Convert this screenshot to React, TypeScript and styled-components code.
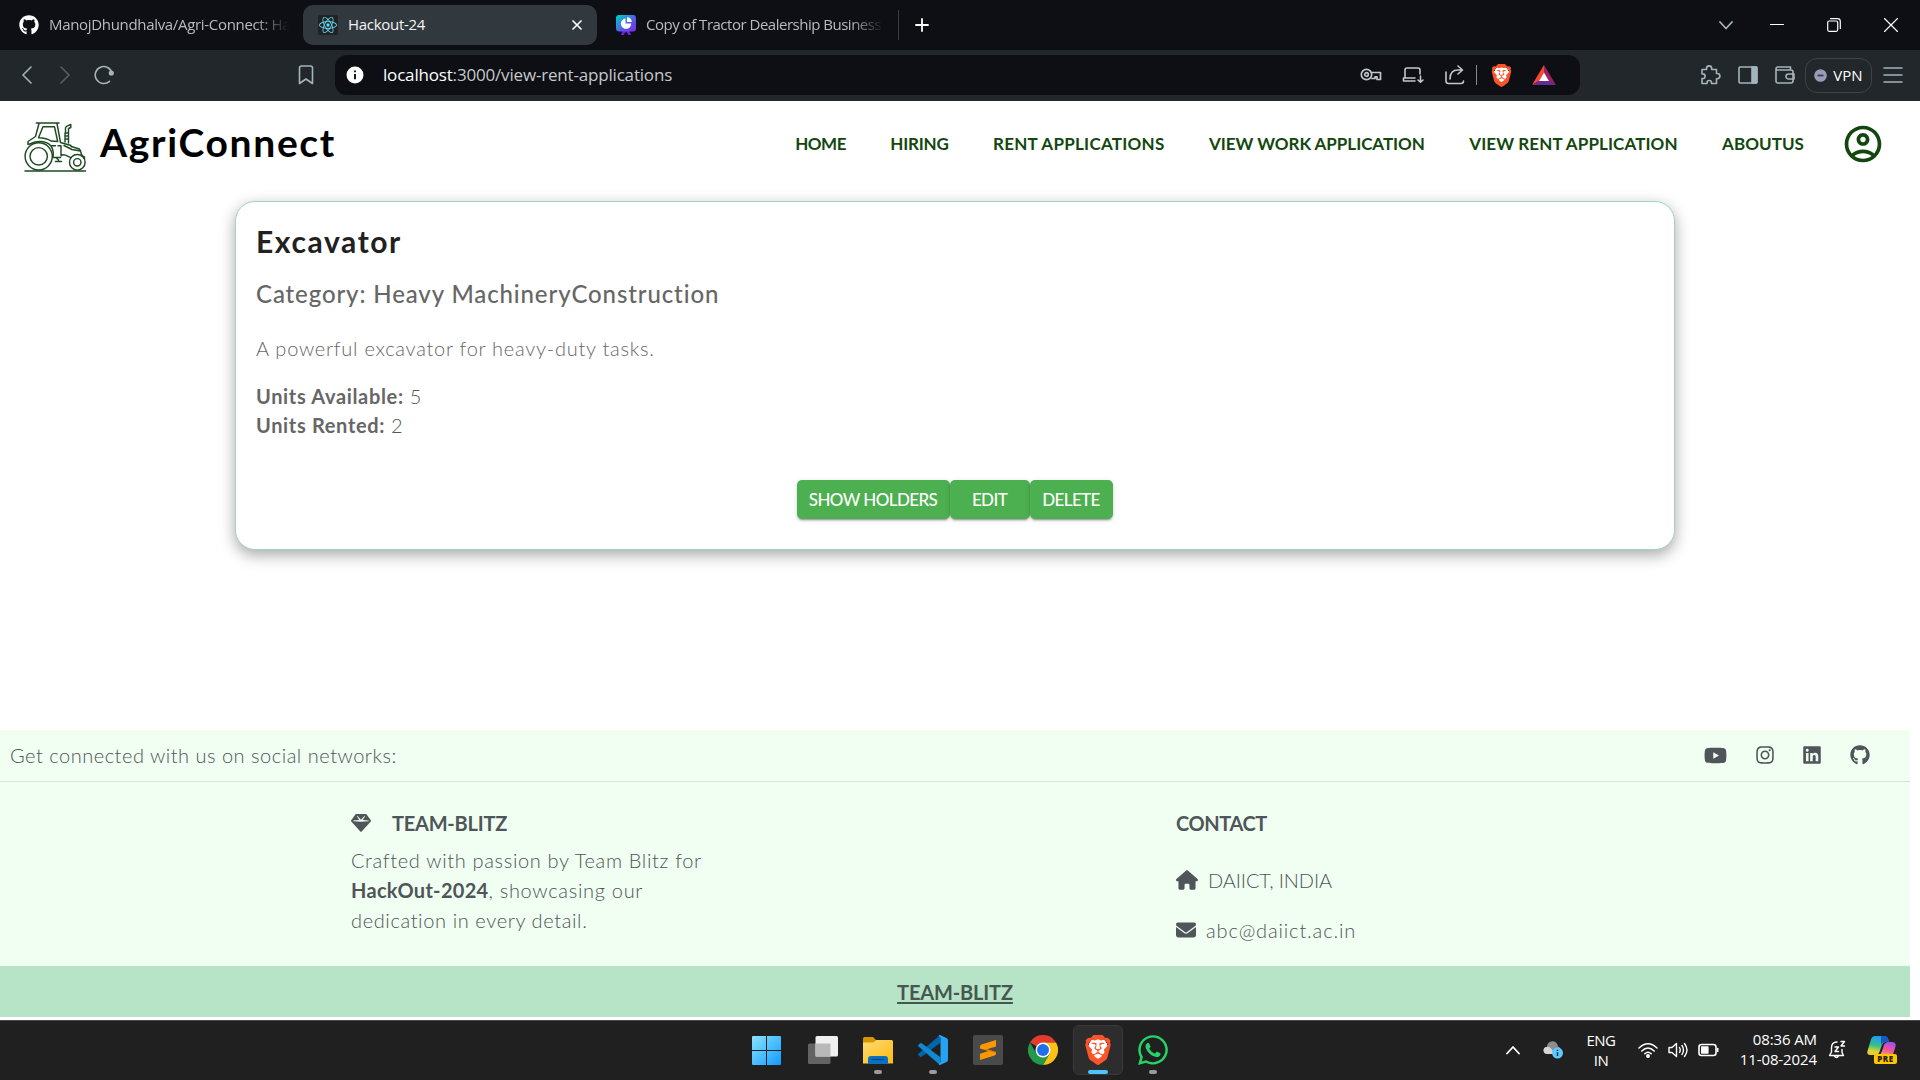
import React from "react";
import styled, { createGlobalStyle, css } from "styled-components";
import {
  FaGithub,
  FaYoutube,
  FaInstagram,
  FaLinkedin,
  FaGem,
  FaHouse,
  FaEnvelope,
  FaWhatsapp,
} from "react-icons/fa6";
import { MdOutlineAccountCircle } from "react-icons/md";
import { SiBrave, SiReact } from "react-icons/si";

const GlobalStyle = createGlobalStyle`
  * { box-sizing: border-box; }
  body {
    margin: 0;
    background: #fff;
    font-family: Lato, "Open Sans", sans-serif;
    overflow: hidden;
  }
  h1, h2, h3, p { margin: 0; }
  svg { display: block; flex: none; }
`;

const uiFont = css`
  font-family: "Open Sans", "Noto Sans", sans-serif;
`;

const Screen = styled.div`
  width: 1920px;
  height: 1080px;
  display: flex;
  flex-direction: column;
`;

/* ---------- browser chrome ---------- */

const TabStrip = styled.div`
  ${uiFont}
  height: 50px;
  flex: none;
  display: flex;
  align-items: center;
  background: #0d0f14;
  padding-left: 9px;
`;

const Tab = styled.div<{ $active?: boolean; $width: number; $inset: number }>`
  width: ${(p) => p.$width}px;
  height: 40px;
  display: flex;
  align-items: center;
  gap: 10px;
  padding: 0 14px 0 ${(p) => p.$inset}px;
  border-radius: 10px;
  font-size: 15px;
  color: ${(p) => (p.$active ? "#f1f3f4" : "#b9bbbe")};
  background: ${(p) => (p.$active ? "#31393e" : "transparent")};
`;

const TabTitle = styled.span<{ $fade?: boolean; $track: number }>`
  flex: 1;
  min-width: 0;
  padding-bottom: 2px;
  white-space: nowrap;
  letter-spacing: ${(p) => p.$track}px;
  ${(p) =>
    p.$fade &&
    css`
      mask-image: linear-gradient(to right, #000 calc(100% - 34px), transparent);
    `}
`;

const ReactTile = styled.span`
  width: 20px;
  height: 20px;
  display: grid;
  place-items: center;
  border-radius: 2px;
  background: #222;
  color: #61dafb;
`;

const TabDivider = styled.span`
  width: 1px;
  height: 30px;
  background: #3a3d42;
  margin-right: 16px;
`;

const WindowControls = styled.div`
  margin-left: auto;
  display: flex;
  align-items: center;
  gap: 43px;
  padding-right: 22px;
`;

const TabSearch = styled.span`
  margin-right: -6px;
`;

const Toolbar = styled.div`
  ${uiFont}
  height: 51px;
  flex: none;
  display: flex;
  align-items: center;
  background: #21272a;
  padding: 0 17px 1px 20px;
  color: #a5b4bc;
`;

const NavButtons = styled.div`
  display: flex;
  align-items: center;
  gap: 23px;
`;

const BookmarkSlot = styled.div`
  margin-left: 184px;
`;

const AddressBar = styled.div`
  width: 1245px;
  height: 40px;
  margin-left: 21px;
  display: flex;
  align-items: center;
  padding: 0 24px 0 11px;
  border-radius: 12px;
  background: #0d0f14;
  color: #c3c6c9;
`;

const Url = styled.span`
  margin: 0 auto 0 19px;
  padding-bottom: 1px;
  font-size: 17px;
  letter-spacing: -0.18px;
  color: #c6c8ca;
`;

const UrlHost = styled.span`
  color: #fff;
`;

const AddressActions = styled.div`
  display: flex;
  align-items: center;
  gap: 20px;
`;

const ShieldGroup = styled.div`
  display: flex;
  align-items: center;
  gap: 13px;
  margin-left: -10px;
`;

const ThinRule = styled.span`
  width: 1px;
  height: 20px;
  background: #85898c;
`;

const BraveMark = styled(SiBrave)`
  color: #fb542b;
  background: radial-gradient(ellipse 34% 38% at 50% 46%, #fff 96%, transparent 100%);
`;

const BatTriangleSlot = styled.span`
  margin-left: 6px;
`;

const ToolbarActions = styled.div`
  display: flex;
  align-items: center;
  gap: 17px;
  margin-left: auto;
`;

const VpnPill = styled.div`
  width: 67px;
  height: 35px;
  margin: 0 -6px 0 -7px;
  display: flex;
  align-items: center;
  justify-content: center;
  gap: 6px;
  border: 1px solid #3b4549;
  border-radius: 12px;
  font-size: 15px;
  color: #fff;
`;

/* ---------- page ---------- */

const Page = styled.main`
  height: 919px;
  width: 1910px;
  display: flex;
  flex-direction: column;
`;

const SiteHeader = styled.header`
  height: 86px;
  flex: none;
  display: flex;
  align-items: center;
  padding: 0 25px 0 20px;
`;

const LogoSlot = styled.span`
  margin-top: 5px;
`;

const BrandName = styled.h1`
  margin: -4px 0 0 10px;
  font-size: 39px;
  line-height: 48px;
  font-weight: 700;
  letter-spacing: 1.66px;
  color: #000;
`;

const SiteNav = styled.nav`
  display: flex;
  gap: 44.4px;
  margin-left: auto;
  padding-bottom: 2px;
`;

const NavLink = styled.a<{ $track: number }>`
  font-size: 17px;
  font-weight: 700;
  white-space: nowrap;
  letter-spacing: ${(p) => p.$track}px;
  color: #13470f;
`;

const AccountIcon = styled(MdOutlineAccountCircle)`
  margin-left: 37px;
  color: #13470f;
`;

const Card = styled.section`
  width: 1440px;
  height: 349px;
  flex: none;
  margin: 14px auto 0;
  padding: 21px 20px 0;
  border: 1px solid #a3d5bb;
  border-radius: 20px;
  background: #fff;
  box-shadow: rgba(0, 0, 0, 0.35) 0 5px 15px;
`;

const CardTitle = styled.h2`
  font-size: 30px;
  line-height: 36px;
  letter-spacing: 1.6px;
  color: #212121;
`;

const CardCategory = styled.h3`
  margin-top: 20px;
  font-size: 24px;
  line-height: 30px;
  font-weight: 500;
  letter-spacing: 0.88px;
  color: #666;
`;

const CardText = styled.p`
  margin: 24px 0 19px;
  font-size: 20px;
  line-height: 30px;
  font-weight: 300;
  letter-spacing: 0.74px;
  color: #666;
`;

const UnitLine = styled.p`
  display: flex;
  gap: 6px;
  font-size: 20px;
  line-height: 29px;
  font-weight: 300;
  color: #555;
`;

const UnitLabel = styled.strong`
  font-weight: 700;
  letter-spacing: 0.66px;
  color: #666;
`;

const Actions = styled.div`
  margin-top: 40px;
  display: flex;
  justify-content: center;
`;

const ActionButton = styled.button<{ $width: number }>`
  width: ${(p) => p.$width}px;
  height: 39px;
  padding: 0 1px 0 0;
  border: 0;
  border-radius: 5px;
  background: #4caf50;
  color: #fff;
  font: 500 17px Lato, sans-serif;
  letter-spacing: -0.6px;
  white-space: nowrap;
  box-shadow: 0 3px 1px -2px rgba(0, 0, 0, 0.2), 0 2px 2px rgba(0, 0, 0, 0.14),
    0 1px 5px rgba(0, 0, 0, 0.12);
`;

const SiteFooter = styled.footer`
  margin-top: 180px;
  display: flex;
  flex-direction: column;
  background: #f0fff1;
  color: #4f5559;
`;

const SocialRow = styled.div`
  height: 52px;
  display: flex;
  align-items: center;
  justify-content: space-between;
  padding: 0 40px 1px 10px;
  border-bottom: 1px solid #d7e4e0;
`;

const LightText = styled.p<{ $track: number }>`
  font-size: 20px;
  line-height: 30px;
  font-weight: 300;
  white-space: nowrap;
  letter-spacing: ${(p) => p.$track}px;
`;

const StrongText = styled.strong`
  font-weight: 700;
  letter-spacing: 0.3px;
`;

const SocialLinks = styled.div`
  display: flex;
  align-items: center;
  gap: 27.7px;
`;

const FooterColumns = styled.div`
  height: 184px;
  display: grid;
  grid-template-columns: 825px 1fr;
  padding: 29px 0 0 351px;
`;

const FooterTitle = styled.h3<{ $track: number; $gapBelow: number }>`
  display: flex;
  align-items: center;
  gap: 21px;
  margin-bottom: ${(p) => p.$gapBelow}px;
  font-size: 20px;
  line-height: 24px;
  font-weight: 700;
  letter-spacing: ${(p) => p.$track}px;
`;

const ContactLines = styled.div`
  display: flex;
  flex-direction: column;
  gap: 20px;
`;

const ContactLine = styled.div`
  display: flex;
  align-items: center;
  gap: 10px;
`;

const CopyrightBar = styled.div`
  height: 51px;
  display: flex;
  align-items: center;
  justify-content: center;
  background: #b7e4c7;
`;

const CopyrightLink = styled.a`
  font-size: 20px;
  font-weight: 700;
  letter-spacing: -0.15px;
  color: #465751;
  text-decoration: underline;
  text-decoration-skip-ink: none;
  text-decoration-thickness: 2px;
  text-underline-offset: 2px;
`;

/* ---------- taskbar ---------- */

const Taskbar = styled.div`
  ${uiFont}
  height: 60px;
  flex: none;
  display: flex;
  align-items: center;
  background: #202020;
  border-top: 1px solid #474747;
  padding: 0 23px 1px 743px;
  color: #fff;
`;

const TaskIcons = styled.div`
  display: flex;
  gap: 5px;
`;

const TaskSlot = styled.div<{ $active?: boolean; $open?: boolean; $shift?: number }>`
  width: 50px;
  height: 50px;
  display: grid;
  place-items: center;
  position: relative;
  padding-right: ${(p) => p.$shift ?? 0}px;
  border-radius: 6px;
  border: 1px solid ${(p) => (p.$active ? "#393939" : "transparent")};
  background: ${(p) => (p.$active ? "#2d2d2d" : "transparent")};
  &::after {
    content: "";
    display: ${(p) => (p.$active || p.$open ? "block" : "none")};
    position: absolute;
    bottom: 0;
    left: calc(50% - ${(p) => (p.$active ? 10 : 4)}px);
    width: ${(p) => (p.$active ? 20 : 8)}px;
    height: 4px;
    border-radius: 2px;
    background: ${(p) => (p.$active ? "#4cc2ff" : "#9a9a9a")};
  }
`;

const Tray = styled.div`
  margin-left: auto;
  display: flex;
  align-items: center;
  font-size: 15px;
  line-height: 20px;
`;

const Language = styled.div`
  width: 30px;
  margin: -1px 22px 0 23px;
  text-align: center;
  letter-spacing: -0.5px;
`;

const StatusIcons = styled.div`
  display: flex;
  gap: 10px;
`;

const Clock = styled.div`
  width: 78px;
  margin: -2px 11px 0 20px;
  text-align: right;
  white-space: nowrap;
  letter-spacing: -0.1px;
`;

const CloudSlot = styled.span`
  margin-left: 23px;
`;

const CopilotSlot = styled.span`
  margin-left: 21px;
`;

/* ---------- drawings ---------- */

type StrokeProps = {
  w: number;
  h: number;
  sw?: number;
  color?: string;
  children: React.ReactNode;
};

const Stroke = ({ w, h, sw = 1.6, color = "currentColor", children }: StrokeProps) => (
  <svg
    width={w}
    height={h}
    viewBox={`0 0 ${w} ${h}`}
    fill="none"
    stroke={color}
    strokeWidth={sw}
    strokeLinecap="round"
    strokeLinejoin="round"
  >
    {children}
  </svg>
);

const Tractor = () => (
  <Stroke w={70} h={58} sw={1.45} color="#1f4a23">
    <path d="M5 53H65.500" />
    <circle cx="18.700" cy="38.300" r="13.600" />
    <circle cx="18.700" cy="38.300" r="8.700" />
    <circle cx="57.300" cy="44.300" r="7.800" />
    <circle cx="57.300" cy="44.300" r="3.700" />
    <path d="M16.300 5H39M19 5.500L15.500 18.500L8 23.500L8 26.500L11 25.500C17 22.500 26 22.500 31 28C33 31 34 34 33 39.500H40.500" />
    <path d="M23 8.800H34.500L37.700 23.500L31 23C28 21 24 20 18.500 19.800Z" />
    <path d="M37 5.500L40.500 24.500L51 27.500M51 28.500L54 29.300M44 27.500L52 31.500L60.500 33L61.500 36.500L62.500 38M53.500 29.300L59.500 31L60.500 33" />
    <path d="M45 24V15H48.500V25M45.500 15V10Q46 7.800 48.500 7.500L50.800 6.500V9.500L48.500 10.500V15M45.500 18H48M45.500 21H48" />
    <path d="M31.500 27.800H35.500M38 27.800H41V37M41 33V38M42 37C46 35.500 48 39.500 51 39.500M36 39.500L38.500 42V43.500M35.500 43.500H41.500M62 38L64.500 39V40.500" />
  </Stroke>
);

const CanvaTile = () => (
  <svg width="20" height="20" viewBox="0 0 20 20">
    <defs>
      <linearGradient id="tile" x1="0" y1="0" x2="1" y2="1">
        <stop offset="0.1" stopColor="#00c4cc" />
        <stop offset="0.6" stopColor="#5b57e6" />
        <stop offset="1" stopColor="#7d2ae8" />
      </linearGradient>
    </defs>
    <path d="M7 15L5 20H7.500L10 16.500L12.500 20H15L13 15Z" fill="#6d20e0" />
    <rect width="20" height="16.500" rx="3" fill="url(#tile)" />
    <path d="M9.500 3.500V8.500H15.200A5.200 5.200 0 1 1 9.500 3.500Z" fill="#fff" />
    <path d="M11 2.300A5 5 0 0 1 15.800 7H11Z" fill="#fff" />
  </svg>
);

const InfoDot = () => (
  <svg width="18" height="18" viewBox="0 0 18 18">
    <circle cx="9" cy="9" r="8.500" fill="#fff" />
    <path d="M9 4.500V6.300M9 8V13.300" stroke="#0d0f14" strokeWidth="1.900" />
  </svg>
);

const BatTriangle = () => (
  <svg width="24" height="20" viewBox="0 0 24 20">
    <path d="M12 0L0 20L7 16L12 7.500Z" fill="#ff4724" />
    <path d="M12 0L24 20L17 16L12 7.500Z" fill="#9e1f63" />
    <path d="M0 20H24L17 15.500H7Z" fill="#662d91" />
    <path d="M12 7.500L7 16H17Z" fill="#fff" />
  </svg>
);

const WindowsLogo = () => (
  <svg width="29" height="29" viewBox="0 0 29 29">
    <defs>
      <linearGradient id="win" x1="0" y1="0" x2="1" y2="1">
        <stop offset="0" stopColor="#8be3ff" />
        <stop offset="1" stopColor="#0f9bff" />
      </linearGradient>
    </defs>
    <path
      d="M0 1Q0 0 1 0H14V14H0ZM15 0H28Q29 0 29 1V14H15ZM0 15H14V29H1Q0 29 0 28ZM15 15H29V28Q29 29 28 29H15Z"
      fill="url(#win)"
    />
  </svg>
);

const TaskView = () => (
  <svg width="30" height="28" viewBox="0 0 30 28">
    <rect x="0" y="7.500" width="22.500" height="20.500" rx="1.500" fill="#636363" />
    <rect x="7.500" y="0" width="22.500" height="20.500" rx="1.500" fill="#f0f0f0" />
    <rect x="7.500" y="7.500" width="15" height="13" fill="#b9b9b9" />
  </svg>
);

const FolderIcon = () => (
  <svg width="30" height="27" viewBox="0 0 30 27">
    <defs>
      <linearGradient id="folder" x1="0" y1="0" x2="1" y2="1">
        <stop offset="0" stopColor="#ffdb73" />
        <stop offset="1" stopColor="#fdba12" />
      </linearGradient>
    </defs>
    <path d="M0 1.500Q0 0 1.500 0H10L13 3L10 6H0Z" fill="#d99500" />
    <path d="M0 5.500H10L13 3H28.500Q30 3 30 4.500V26.500H0Z" fill="url(#folder)" />
    <path d="M5 27V22Q5 19 8 19H22Q25 19 25 22V27Z" fill="#0c6fc0" />
    <path d="M8.500 22.500H21.500" stroke="#064a86" strokeWidth="1.200" />
  </svg>
);

const CodeIcon = () => (
  <svg width="30" height="30" viewBox="0 0 30 30">
    <path d="M22 0L22.500 7.800L4 21.600Q2.800 22.400 1.800 21.500L0.500 20.200Q-0.300 19.300 0.600 18.500Z" fill="#0065a9" />
    <path d="M22 30L22.500 22.200L4 8.400Q2.800 7.600 1.800 8.500L0.500 9.800Q-0.300 10.700 0.600 11.500Z" fill="#1088d2" />
    <path d="M22 0L28.500 2.900Q30 3.600 30 5.200V24.800Q30 26.400 28.500 27.100L22 30Q21 30 20.600 29.200L22.500 27V3L20.600 0.800Q21 0 22 0Z" fill="#27a2f2" />
  </svg>
);

const SublimeIcon = () => (
  <svg width="30" height="30" viewBox="0 0 30 30">
    <rect width="30" height="30" rx="2" fill="#4a4a4a" />
    <path d="M23 5V11.500L14 14.200L23 17V18.500Q23 20 21.500 20.600L7 25V18.800L15.500 16L7 13.400V11.200Q7 10 8.500 9.500Z" fill="#ff9800" />
    <path d="M14 14.200L23 17V18L15.500 16L11 14.600Z" fill="#d97a00" />
  </svg>
);

const ChromeIcon = () => (
  <svg width="30" height="30" viewBox="0 0 30 30">
    <path d="M15 15L2 7.500A15 15 0 0 1 28 7.500H15Z" fill="#e33b2e" />
    <path d="M15 7.500H28A15 15 0 0 1 15 30L21.500 18.750Z" fill="#fbc116" />
    <path d="M2 7.500A15 15 0 0 0 15 30L21.500 18.750L15 15L8.500 18.750Z" fill="#229a4a" />
    <circle cx="15" cy="15" r="7.500" fill="#fff" />
    <circle cx="15" cy="15" r="6" fill="#1f6fea" />
  </svg>
);

const CloudInfo = () => (
  <svg width="20" height="18" viewBox="0 0 20 18">
    <path d="M4 6A5.500 5.500 0 0 1 15 5.500Q17.500 6 17.500 9L12 13H4.500A4.200 4.200 0 0 1 0.500 9Q1 6.500 4 6Z" fill="#8d8d8d" />
    <path d="M0.500 9Q1 5.800 4.500 5.800Q7 5.800 8.500 8L12 13H4.500Q0.500 13 0.500 9Z" fill="#d6d6d6" />
    <circle cx="14.500" cy="12" r="5.500" fill="#5ccaff" />
    <path d="M14.500 8.700V10M14.500 11.200V15" stroke="#14344a" strokeWidth="1.500" />
  </svg>
);

const Copilot = () => (
  <svg width="30" height="30" viewBox="0 0 30 30">
    <defs>
      <linearGradient id="copLeft" x1="0.500" y1="0" x2="0.300" y2="1">
        <stop offset="0" stopColor="#1d9bf5" />
        <stop offset="0.500" stopColor="#35c08b" />
        <stop offset="0.800" stopColor="#d8d436" />
        <stop offset="1" stopColor="#f6c92b" />
      </linearGradient>
      <linearGradient id="copRight" x1="0.700" y1="0" x2="0.300" y2="1">
        <stop offset="0" stopColor="#a24df0" />
        <stop offset="0.600" stopColor="#f0569a" />
        <stop offset="1" stopColor="#ff9a62" />
      </linearGradient>
    </defs>
    <path d="M8 1H17Q20 1 21 4L22 7H19Q16 7 15 10L12 18Q11 20 8 20H3Q-0.500 20 0.500 16L4 4.500Q5 1 8 1Z" fill="url(#copLeft)" />
    <path d="M14 1H17Q20 1 21 4L22 7H18Q15 7 14 10Z" fill="#1558c8" />
    <path d="M22 7H25.500Q29.500 7.500 28.500 11.500L26.500 18Q26 20 23 20H12.500Q14 19 15 16L17 10Q18 7 22 7Z" fill="url(#copRight)" />
    <rect x="7" y="19" width="23" height="10" rx="2" fill="#ffc700" />
    <text x="18.500" y="27" textAnchor="middle" fontFamily="Open Sans, sans-serif" fontWeight="800" fontSize="8" letterSpacing="0.600" fill="#2a2000">
      PRE
    </text>
  </svg>
);

/* ---------- data ---------- */

const navLinks: { label: string; track: number }[] = [
  { label: "HOME", track: -0.5 },
  { label: "HIRING", track: -0.22 },
  { label: "RENT APPLICATIONS", track: 0.27 },
  { label: "VIEW WORK APPLICATION", track: -0.03 },
  { label: "VIEW RENT APPLICATION", track: 0.1 },
  { label: "ABOUTUS", track: 0.07 },
];

const BrowserChrome = () => (
  <>
    <TabStrip>
      <Tab $width={294} $inset={10}>
        <FaGithub size={20} color="#fff" />
        <TabTitle $fade $track={-0.32}>ManojDhundhalva/Agri-Connect: Ha</TabTitle>
      </Tab>
      <Tab $active $width={294} $inset={15}>
        <ReactTile>
          <SiReact size={18} />
        </ReactTile>
        <TabTitle $track={-0.3}>Hackout-24</TabTitle>
        <Stroke w={12} h={12} sw={1.7} color="#fff">
          <path d="M2 2L10 10M10 2L2 10" />
        </Stroke>
      </Tab>
      <Tab $width={301} $inset={19}>
        <CanvaTile />
        <TabTitle $fade $track={-0.49}>Copy of Tractor Dealership Business</TabTitle>
      </Tab>
      <TabDivider />
      <Stroke w={14} h={14} sw={1.8} color="#fff">
        <path d="M7 1V13M1 7H13" />
      </Stroke>
      <WindowControls>
        <TabSearch>
          <Stroke w={14} h={10} sw={1.8} color="#a5b4bc">
            <path d="M1 2L7 8.500L13 2" />
          </Stroke>
        </TabSearch>
        <Stroke w={14} h={14} sw={1} color="#fff">
          <path d="M0.500 6.500H13.500" />
        </Stroke>
        <Stroke w={14} h={14} sw={1.2} color="#fff">
          <path d="M3.500 0.700H10.500Q13.300 0.700 13.300 3.500V10.500" />
          <rect x="0.700" y="3" width="10" height="10.300" rx="1.500" />
        </Stroke>
        <Stroke w={14} h={14} sw={1.2} color="#fff">
          <path d="M0.500 0.500L13.500 13.500M13.500 0.500L0.500 13.500" />
        </Stroke>
      </WindowControls>
    </TabStrip>
    <Toolbar>
      <NavButtons>
        <Stroke w={14} h={18}>
          <path d="M11 1L3 9L11 17" />
        </Stroke>
        <Stroke w={14} h={18} color="#566066">
          <path d="M4 1L12 9L4 17" />
        </Stroke>
        <Stroke w={20} h={20}>
          <path d="M18 8A8.500 8.500 0 1 0 15.500 16.300" />
          <circle cx="17.300" cy="8" r="1.800" fill="currentColor" />
        </Stroke>
      </NavButtons>
      <BookmarkSlot>
        <Stroke w={16} h={20}>
          <path d="M3.500 1H12.500Q14.500 1 14.500 3V18.500L8 14L1.500 18.500V3Q1.500 1 3.500 1Z" />
        </Stroke>
      </BookmarkSlot>
      <AddressBar>
        <InfoDot />
        <Url>
          <UrlHost>localhost</UrlHost>:3000/view-rent-applications
        </Url>
        <AddressActions>
          <Stroke w={22} h={16} sw={1.7}>
            <circle cx="6.500" cy="7.500" r="5.200" />
            <circle cx="6.500" cy="7.500" r="1.800" />
            <path d="M11.500 5.500H20.500V12.500H17V9.800H15V11.500H12" />
          </Stroke>
          <Stroke w={22} h={16} sw={1.6}>
            <path d="M3 11V3Q3 1 5 1H16Q18 1 18 3V7M13 11H1.500V14H13M18.500 9V15M16 13L18.500 15.200L21 13" />
          </Stroke>
          <Stroke w={22} h={20} sw={1.6}>
            <path d="M2 7V16Q2 18.500 4.500 18.500H17Q19.500 18.500 19.500 16M6 14Q6 5 14 5H17.500M14 1L18.500 5L14 9" />
          </Stroke>
          <ShieldGroup>
            <ThinRule />
            <BraveMark size={23} />
            <BatTriangleSlot>
              <BatTriangle />
            </BatTriangleSlot>
          </ShieldGroup>
        </AddressActions>
      </AddressBar>
      <ToolbarActions>
        <Stroke w={21} h={20} sw={1.6}>
          <path d="M2 4.500H6.500V3.500A2.600 2.600 0 0 1 11.700 3.500V4.500H16.500V8.500H17.300A2.600 2.600 0 0 1 17.300 13.700H16.500V18.500H11.500V17.700A2.200 2.200 0 0 0 7 17.700V18.500H2V13.500H2.800A2.300 2.300 0 0 0 2.800 8.900H2Z" />
        </Stroke>
        <Stroke w={20} h={18}>
          <rect x="1" y="1" width="18" height="16" rx="1" />
          <path d="M14 1H18.500V17H14Z" fill="currentColor" />
        </Stroke>
        <Stroke w={20} h={18}>
          <path d="M15.500 3.800V1H3Q1 1 1 3V15Q1 17 3 17H16Q18 17 18 15V5.800Q18 4 16 4H2" />
          <path d="M19 8H13.500A2.300 2.300 0 0 0 13.500 13H19Z" />
        </Stroke>
        <VpnPill>
          <svg width="13" height="13" viewBox="0 0 13 13">
            <circle cx="6.500" cy="6.500" r="6.300" fill="#9a9bb8" />
            <path d="M3.500 6.500H9.500" stroke="#3a3b52" strokeWidth="1.800" />
          </svg>
          VPN
        </VpnPill>
        <Stroke w={20} h={16} sw={1.5}>
          <path d="M1 1H19M1 8H19M1 15H19" />
        </Stroke>
      </ToolbarActions>
    </Toolbar>
  </>
);

const SystemTaskbar = () => (
  <Taskbar>
    <TaskIcons>
      <TaskSlot $shift={3}><WindowsLogo /></TaskSlot>
      <TaskSlot><TaskView /></TaskSlot>
      <TaskSlot $open><FolderIcon /></TaskSlot>
      <TaskSlot $open><CodeIcon /></TaskSlot>
      <TaskSlot><SublimeIcon /></TaskSlot>
      <TaskSlot><ChromeIcon /></TaskSlot>
      <TaskSlot $active><BraveMark size={30} /></TaskSlot>
      <TaskSlot $open><FaWhatsapp size={34} color="#25d366" /></TaskSlot>
    </TaskIcons>
    <Tray>
      <Stroke w={14} h={10} sw={1.8} color="#fff">
        <path d="M1 8.500L7 2L13 8.500" />
      </Stroke>
      <CloudSlot><CloudInfo /></CloudSlot>
      <Language>ENG<br />IN</Language>
      <StatusIcons>
        <Stroke w={20} h={18} sw={1.5} color="#fff">
          <path d="M1 7Q10 -1.500 19 7M3.800 10Q10 4 16.200 10M6.800 12.800Q10 9.800 13.200 12.800" />
          <circle cx="10" cy="15" r="1.200" fill="#fff" />
        </Stroke>
        <Stroke w={20} h={18} sw={1.4} color="#fff">
          <path d="M1 6.500V11.500H4L8.500 15.500V2.500L4 6.500ZM11.500 6.500Q13 9 11.500 11.500M14 4.500Q17 9 14 13.500M16.500 2.500Q21.500 9 16.500 15.500" />
        </Stroke>
        <Stroke w={21} h={18} sw={1.6} color="#fff">
          <rect x="1" y="3.500" width="17" height="11" rx="2.500" />
          <rect x="3.800" y="6" width="6" height="6" fill="#fff" />
          <path d="M19.700 7.500V10.500" />
        </Stroke>
      </StatusIcons>
      <Clock>08:36 AM<br />11-08-2024</Clock>
      <Stroke w={18} h={20} sw={1.4} color="#fff">
        <path d="M9 2Q3.500 2 3.500 8V12L1.500 15.500H15.500L14 12.500V9.500M6.500 16Q8.500 19 10.500 16M7 7H10.500L7 11.500H10.500M13 1.500H16.500L13 6H16.500" />
      </Stroke>
      <CopilotSlot><Copilot /></CopilotSlot>
    </Tray>
  </Taskbar>
);

export default function App() {
  return (
    <Screen>
      <GlobalStyle />
      <BrowserChrome />
      <Page>
        <SiteHeader>
          <LogoSlot><Tractor /></LogoSlot>
          <BrandName>AgriConnect</BrandName>
          <SiteNav>
            {navLinks.map((l) => (
              <NavLink key={l.label} $track={l.track}>
                {l.label}
              </NavLink>
            ))}
          </SiteNav>
          <AccountIcon size={44} />
        </SiteHeader>

        <Card>
          <CardTitle>Excavator</CardTitle>
          <CardCategory>Category: Heavy MachineryConstruction</CardCategory>
          <CardText>A powerful excavator for heavy-duty tasks.</CardText>
          <UnitLine><UnitLabel>Units Available:</UnitLabel>5</UnitLine>
          <UnitLine><UnitLabel>Units Rented:</UnitLabel>2</UnitLine>
          <Actions>
            <ActionButton $width={153}>SHOW HOLDERS</ActionButton>
            <ActionButton $width={80}>EDIT</ActionButton>
            <ActionButton $width={83}>DELETE</ActionButton>
          </Actions>
        </Card>

        <SiteFooter>
          <SocialRow>
            <LightText $track={0.51}>Get connected with us on social networks:</LightText>
            <SocialLinks>
              <FaYoutube size={23} />
              <FaInstagram size={20} />
              <FaLinkedin size={20} />
              <FaGithub size={20} />
            </SocialLinks>
          </SocialRow>
          <FooterColumns>
            <div>
              <FooterTitle $track={-0.23} $gapBelow={10}><FaGem size={20} />TEAM-BLITZ</FooterTitle>
              <LightText $track={0.66}>Crafted with passion by Team Blitz for</LightText>
              <LightText $track={0.7}>
                <StrongText>HackOut-2024</StrongText>, showcasing our
              </LightText>
              <LightText $track={0.62}>dedication in every detail.</LightText>
            </div>
            <div>
              <FooterTitle $track={-0.4} $gapBelow={30}>CONTACT</FooterTitle>
              <ContactLines>
                <ContactLine>
                  <FaHouse size={22} />
                  <LightText $track={-0.13}>DAIICT, INDIA</LightText>
                </ContactLine>
                <ContactLine>
                  <FaEnvelope size={20} />
                  <LightText $track={0.85}>abc@daiict.ac.in</LightText>
                </ContactLine>
              </ContactLines>
            </div>
          </FooterColumns>
          <CopyrightBar>
            <CopyrightLink>TEAM-BLITZ</CopyrightLink>
          </CopyrightBar>
        </SiteFooter>
      </Page>
      <SystemTaskbar />
    </Screen>
  );
}
